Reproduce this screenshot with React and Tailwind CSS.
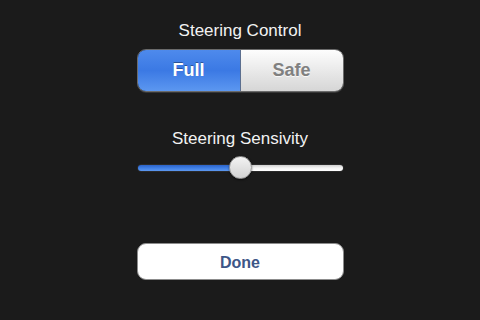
import React, { useState } from "react";

const App = () => {
  const [mode, setMode] = useState("full");
  const [value] = useState(50);

  return (
    <div className="w-[480px] h-[320px] bg-[#1b1b1b] flex flex-col items-center pt-[21px]" style={{ fontFamily: '"Liberation Sans", Arial, sans-serif' }}>
      <div className="w-[207px] flex flex-col items-center">
        {/* Steering control */}
        <p className="text-[17px] leading-[20px] text-[#f2f2f2]">Steering Control</p>
        <div className="mt-[8px] w-full h-[43px] flex rounded-[9px] overflow-hidden border border-[#6b6b6b] shadow-[0_1px_0_rgba(255,255,255,0.12)]">
          <button
            onClick={() => setMode("full")}
            className={`flex-1 text-[18px] font-bold ${mode === "full" ? "bg-gradient-to-b from-[#4e8aec] via-[#3b79e4] to-[#5c97f0] text-white [text-shadow:0_-1px_0_rgba(0,0,0,0.35)]" : "bg-gradient-to-b from-[#fdfdfd] to-[#d6d6d6] text-[#808080]"}`}
          >
            Full
          </button>
          <div className="w-px bg-[#5b6e8e]" />
          <button
            onClick={() => setMode("safe")}
            className={`flex-1 text-[18px] font-bold ${mode === "safe" ? "bg-gradient-to-b from-[#4e8aec] via-[#3b79e4] to-[#5c97f0] text-white [text-shadow:0_-1px_0_rgba(0,0,0,0.35)]" : "bg-gradient-to-b from-[#fdfdfd] to-[#d6d6d6] text-[#808080] [text-shadow:0_1px_0_rgba(255,255,255,0.8)]"}`}
          >
            Safe
          </button>
        </div>

        {/* Sensitivity */}
        <p className="mt-[37px] text-[17px] leading-[20px] text-[#f2f2f2]">Steering Sensivity</p>
        <div className="mt-[7px] w-full h-[23px] relative flex items-center">
          <div className="w-full h-[8px] rounded-full flex overflow-hidden border border-[#2a2a2a]">
            <div className="h-full bg-gradient-to-b from-[#2d63c7] via-[#3f7fe6] to-[#5d98ef]" style={{ width: `${value}%` }} />
            <div className="h-full flex-1 bg-gradient-to-b from-[#cfcfcf] via-[#f4f4f4] to-[#ffffff]" />
          </div>
          <div
            className="absolute top-0 w-[23px] h-[23px] rounded-full bg-gradient-to-b from-[#f3f3f3] to-[#d2d2d2] border border-[#9a9a9a] shadow-[0_1px_2px_rgba(0,0,0,0.5)]"
            style={{ left: `calc(${value}% - 11px)` }}
          />
        </div>

        {/* Done */}
        <button className="mt-[64px] w-full h-[37px] rounded-[9px] bg-white border border-[#8c8c8c] text-[16px] font-bold text-[#3d5687] pt-[2px]">
          Done
        </button>
      </div>
    </div>
  );
};

export default App;
